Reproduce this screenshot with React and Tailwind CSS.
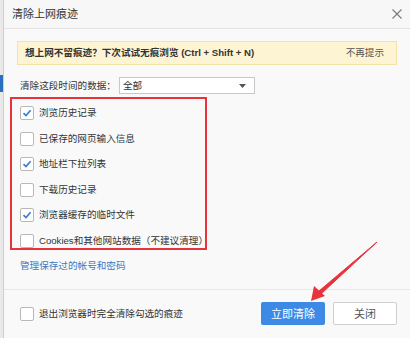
import React from 'react';

const items = [
  { label: '浏览历史记录', checked: true },
  { label: '已保存的网页输入信息', checked: false },
  { label: '地址栏下拉列表', checked: true },
  { label: '下载历史记录', checked: false },
  { label: '浏览器缓存的临时文件', checked: true },
  { label: 'Cookies和其他网站数据（不建议清理）', checked: false },
];

const Box = ({ checked }) => (
  <span className="flex h-[14px] w-[14px] shrink-0 items-center justify-center rounded-[2px] border border-[#b8b8b8] bg-white">
    {checked && (
      <svg width="10" height="10" viewBox="0 0 10 10">
        <path d="M1.5 5.2 L4 7.6 L8.6 2.2" fill="none" stroke="#3b7dd8" strokeWidth="1.7" />
      </svg>
    )}
  </span>
);

export default function App() {
  return (
    <div
      className="relative flex h-[338px] w-[410px] overflow-hidden bg-[#e9e9e9] text-[9.6px] leading-[12px] text-[#333]"
      style={{ fontFamily: '"Liberation Sans", "Noto Sans CJK SC", sans-serif' }}
    >
      {/* background strip */}
      <div className="flex w-[3px] flex-col">
        <div className="h-[75px]" />
        <div className="h-[17px] bg-[#2b6fbf]" />
      </div>

      <div className="flex flex-1 flex-col border-l border-[#cfcfcf] bg-[#f9f9f9]">
        <div className="flex h-[29px] shrink-0 items-center justify-between border-b border-[#e3e3e3] bg-[#f7f7f7] pl-[8px] pr-[8px]">
          <span className="text-[11px] text-[#333]">清除上网痕迹</span>
          <svg width="10" height="10" viewBox="0 0 10 10">
            <path d="M0.5 0.5 L9.5 9.5 M9.5 0.5 L0.5 9.5" stroke="#777" strokeWidth="1.1" />
          </svg>
        </div>

        <div className="flex flex-col pl-[13px] pr-[13px]">
          <div className="mt-[12px] flex h-[24px] items-center justify-between border border-[#f1e2a6] bg-[#fdf4d3] pl-[7px] pr-[12px]">
            <span className="font-bold text-[#333]">想上网不留痕迹？下次试试无痕浏览 (Ctrl + Shift + N)</span>
            <span className="text-[#555]">不再提示</span>
          </div>

          <div className="mt-[12px] flex h-[17px] items-center pl-[3px]">
            <span>清除这段时间的数据：</span>
            <div className="ml-[3px] flex h-[17px] w-[136px] items-center justify-between border border-[#c8c8c8] bg-white pl-[3px] pr-[8px]">
              <span>全部</span>
              <svg width="7" height="4" viewBox="0 0 7 4">
                <path d="M0 0 L7 0 L3.5 4 Z" fill="#555" />
              </svg>
            </div>
          </div>

          <div className="ml-[-7px] mt-[3px] flex h-[153px] w-[197px] flex-col gap-[11.6px] border-2 border-[#e8323c] pl-[8px] pt-[7px]">
            {items.map((it) => (
              <div key={it.label} className="flex h-[14px] items-center gap-[5px]">
                <Box checked={it.checked} />
                <span className="whitespace-nowrap">{it.label}</span>
              </div>
            ))}
          </div>

          <div className="mt-[10px] pl-[3px] text-[#3a78c2]">管理保存过的帐号和密码</div>
        </div>

        <div className="mt-[17px] flex flex-1 items-center justify-between border-t border-[#e6e6e6] pb-[1px] pl-[16px] pr-[13px]">
          <div className="flex items-center gap-[5px]">
            <Box checked={false} />
            <span>退出浏览器时完全清除勾选的痕迹</span>
          </div>
          <div className="flex gap-[8px]">
            <button className="h-[23px] w-[64px] rounded-[2px] bg-[#3d8ae6] text-[11px] text-white">立即清除</button>
            <button className="h-[23px] w-[64px] rounded-[2px] border border-[#cfcfcf] bg-white text-[11px] text-[#555]">关闭</button>
          </div>
        </div>
      </div>

      {/* annotation arrow */}
      <svg className="absolute left-0 top-0" width="410" height="338" viewBox="0 0 410 338">
        <path d="M377 242 L319 291 L321 294 Z" fill="#e8323c" stroke="#e8323c" strokeWidth="1" strokeLinejoin="round" />
        <path d="M311 301 L314 286 L325 296 Z" fill="#e8323c" />
      </svg>
    </div>
  );
}
